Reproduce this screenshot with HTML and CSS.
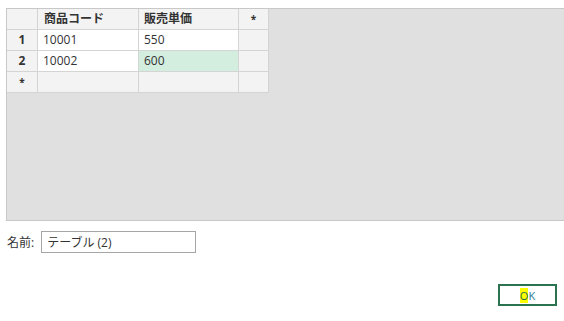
FILE: index.html
```html
<!DOCTYPE html>
<html lang="ja">
<head>
    <meta charset="UTF-8">
    <title>テーブル</title>
    <link rel="stylesheet" href="styles.css">
</head>
<body>
    <div class="preview">
        <table class="grid">
            <tr class="head">
                <th class="rowhead"></th>
                <th class="col1">商品コード</th>
                <th class="col2">販売単価</th>
                <th class="col3 star">*</th>
            </tr>
            <tr>
                <th class="rowhead">1</th>
                <td>10001</td>
                <td>550</td>
                <td class="blank"></td>
            </tr>
            <tr>
                <th class="rowhead">2</th>
                <td>10002</td>
                <td class="selected">600</td>
                <td class="blank"></td>
            </tr>
            <tr>
                <th class="rowhead star">*</th>
                <td class="blank"></td>
                <td class="blank"></td>
                <td class="blank"></td>
            </tr>
        </table>
    </div>

    <div class="name-row">
        <label for="name">名前:</label>
        <input type="text" id="name" value="テーブル (2)">
    </div>

    <div class="actions">
        <button type="button"><span class="key">O</span>K</button>
    </div>
</body>
</html>
```

FILE: styles.css
```css
body {
    margin: 0;
    overflow: hidden;
    font-family: "Open Sans", "Noto Sans CJK JP", sans-serif;
    font-size: 12px;
    color: #333;
    background: #fff;
}
.preview {
    margin: 8px 0 0 6px;
    width: 580px;
    height: 211px;
    background-color: #e0e0e0;
    border: 1px solid #c8c8c8;
}
.grid {
    border-collapse: collapse;
    table-layout: fixed;
}
.grid th, .grid td {
    height: 20px;
    padding: 0 5px;
    border-right: 1px solid #d4d4d4;
    border-bottom: 1px solid #d4d4d4;
    text-align: left;
    line-height: 20px;
    white-space: nowrap;
}
.grid th {
    background-color: #f3f3f3;
    font-weight: bold;
}
.grid td {
    background-color: #fff;
}
.grid .blank {
    background-color: #f3f3f3;
}
.grid .selected {
    background-color: #d3eedf;
}
.rowhead {
    width: 20px;
    text-align: center !important;
}
.col1 {
    width: 89px;
    padding-left: 6px !important;
}
.col2 {
    width: 89px;
}
.col3 {
    width: 19px;
}
.star {
    text-align: center !important;
    font-size: 10px;
}
.name-row {
    display: flex;
    align-items: center;
    margin: 10px 0 0 7px;
}
.name-row label {
    margin-right: 7px;
}
.name-row input {
    box-sizing: border-box;
    width: 155px;
    height: 22px;
    padding: 0 5px;
    border: 1px solid #a6a6a6;
    font-family: inherit;
    font-size: 12px;
    color: #333;
}
.actions {
    display: flex;
    justify-content: flex-end;
    margin: 31px 7px 0 0;
}
button {
    box-sizing: border-box;
    width: 59px;
    height: 22px;
    padding: 0;
    background-color: #fff;
    border: 2px solid #2b7250;
    font-family: inherit;
    font-size: 11px;
    color: #2a7a8e;
}
.key {
    background-color: #ffff00;
    color: #21704a;
}
```
